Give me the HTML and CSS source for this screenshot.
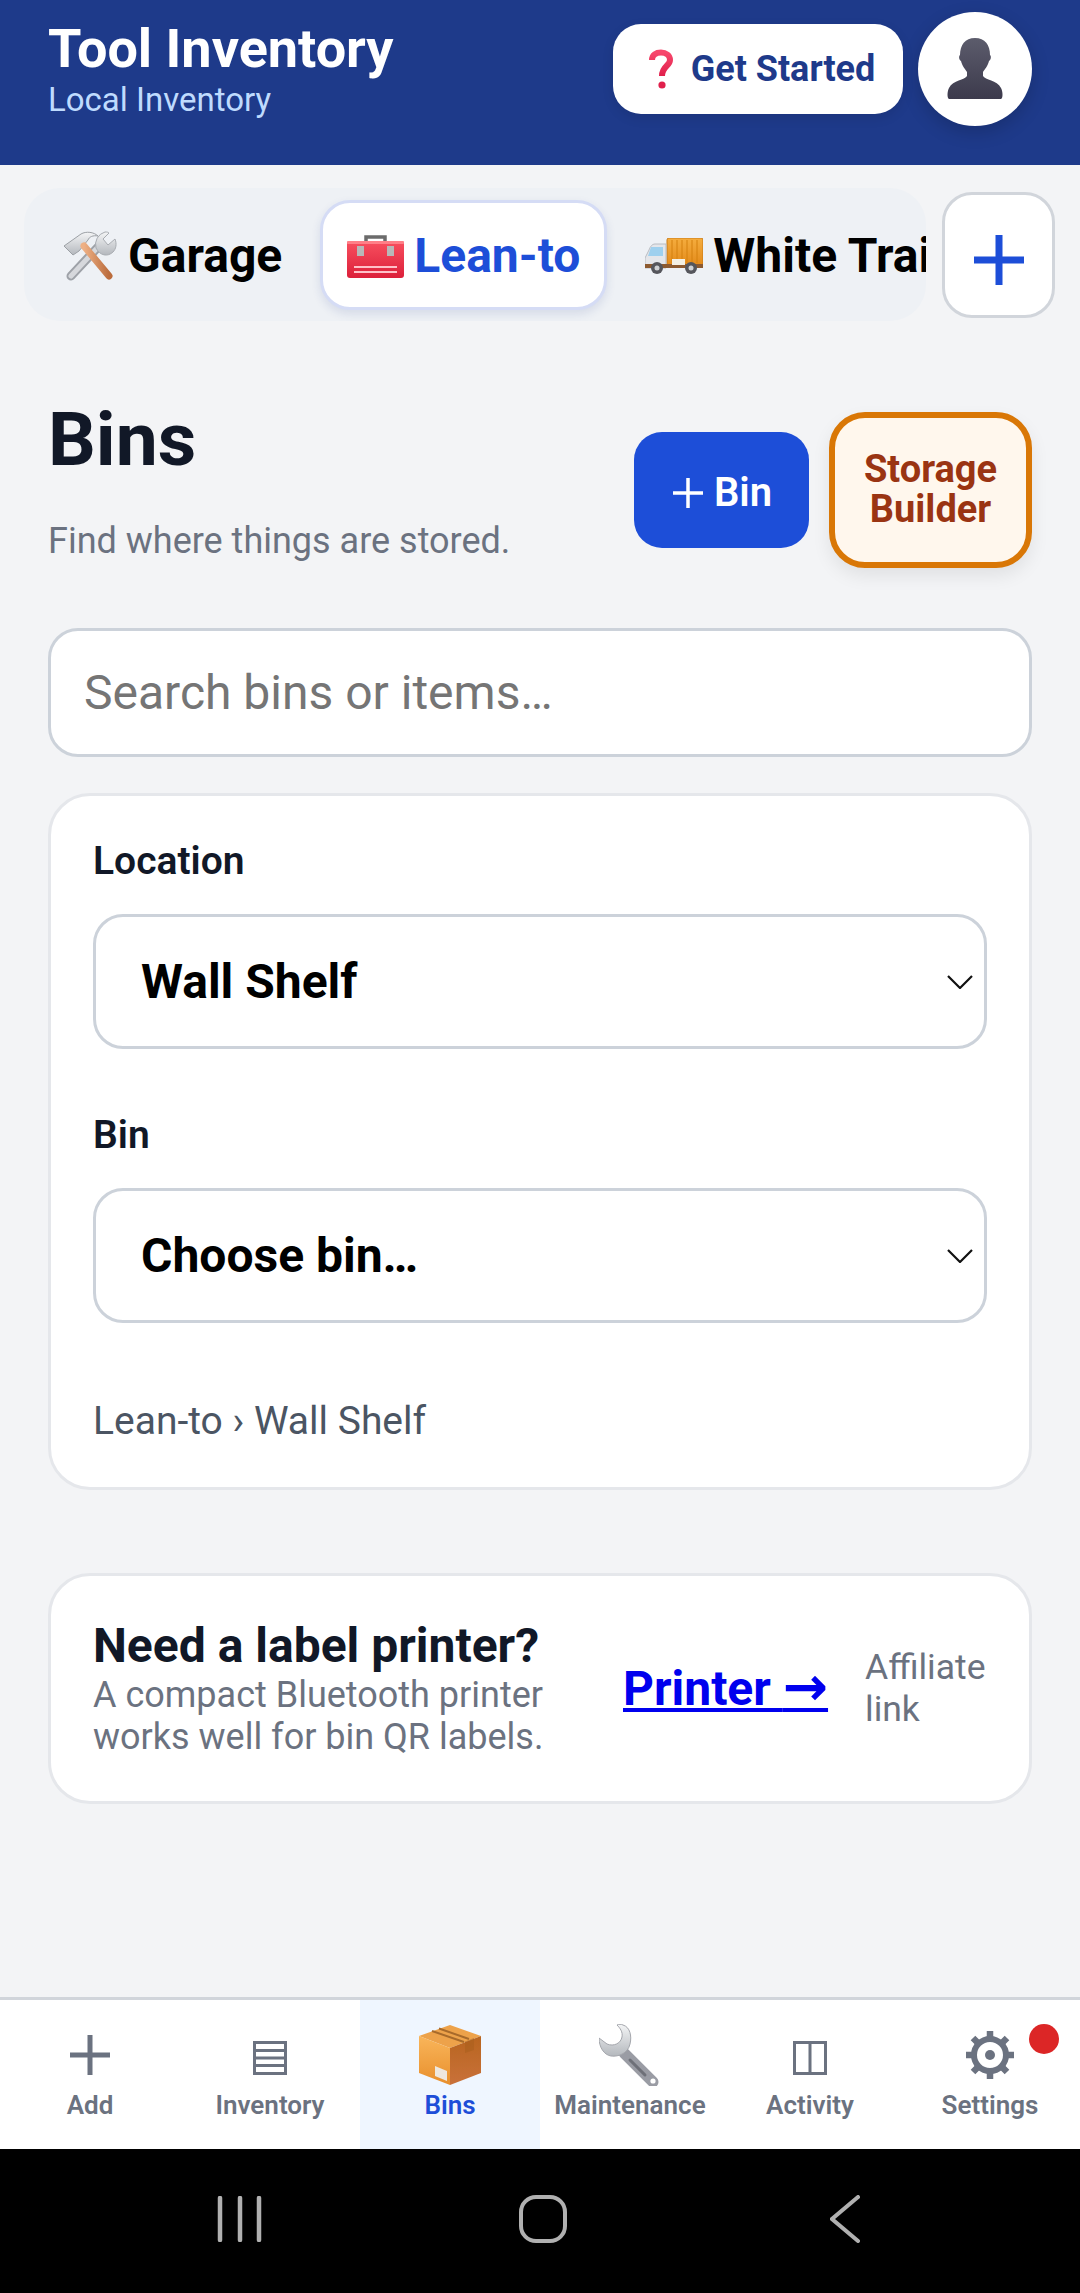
FILE: index.html
```html
<!DOCTYPE html>
<html lang="en">
<head>
    <meta charset="UTF-8">
    <meta name="viewport" content="width=device-width, initial-scale=1.0">
    <title>Tool Inventory</title>
    <link rel="stylesheet" href="styles.css">
</head>
<body>
    <svg class="defs" width="0" height="0" aria-hidden="true">
        <defs>
            <linearGradient id="steel" x1="0" y1="0" x2="0" y2="1"><stop offset="0" stop-color="#f4f5f6"/><stop offset="1" stop-color="#b4b8bd"/></linearGradient>
            <linearGradient id="handle" x1="0" y1="0" x2="1" y2="0"><stop offset="0" stop-color="#eeb084"/><stop offset="1" stop-color="#bb6c3c"/></linearGradient>
            <linearGradient id="redbox" x1="0" y1="0" x2="0" y2="1"><stop offset="0" stop-color="#f8505f"/><stop offset="1" stop-color="#dc1f3a"/></linearGradient>
            <linearGradient id="cargo" x1="0" y1="0" x2="0" y2="1"><stop offset="0" stop-color="#f5ad3e"/><stop offset="1" stop-color="#e38a1a"/></linearGradient>
            <linearGradient id="boxleft" x1="0" y1="0" x2="0" y2="1"><stop offset="0" stop-color="#f9b55a"/><stop offset="1" stop-color="#e88f2c"/></linearGradient>
            <linearGradient id="boxright" x1="0" y1="0" x2="0" y2="1"><stop offset="0" stop-color="#b8651f"/><stop offset="1" stop-color="#c9713a"/></linearGradient>
            <linearGradient id="person" x1="0" y1="0" x2="0" y2="1"><stop offset="0" stop-color="#5c5c6c"/><stop offset="1" stop-color="#3c3a4c"/></linearGradient>
            <linearGradient id="qmark" x1="0" y1="0" x2="0" y2="1"><stop offset="0" stop-color="#f7476c"/><stop offset="1" stop-color="#e0204c"/></linearGradient>
        </defs>
    </svg>

    <header class="topbar">
        <div class="brand">
            <h1>Tool Inventory</h1>
            <p>Local Inventory</p>
        </div>
        <div class="topbar-actions">
            <button class="get-started">
                <svg class="emoji-q" viewBox="0 0 26 40"><path d="M4 11C4 6 8 3.500 13 3.500S22 6.500 22 11C22 17 14 17 14 27" fill="none" stroke="url(#qmark)" stroke-width="6"/><circle cx="14" cy="36" r="3.600" fill="#e0204c"/></svg>
                Get Started
            </button>
            <div class="avatar">
                <svg viewBox="0 0 56 62" width="56" height="62"><path d="M28 0C38 0 43 7 43 17C44.500 18 44 22 42 23C41 28 37 32 36 34V38C38 42 50 42 54 50C56 54 56 60 54 61H2C0 60 0 54 2 50C6 42 18 42 20 38V34C19 32 15 28 14 23C12 22 11.500 18 13 17C13 7 18 0 28 0Z" fill="url(#person)"/></svg>
            </div>
        </div>
    </header>

    <div class="tabbar">
        <div class="tabs">
            <div class="tab">
                <svg class="emoji" viewBox="0 0 56 50" width="56" height="50">
                    <path d="M9 45L37 15" stroke="#9ea2a8" stroke-width="9" stroke-linecap="round"/>
                    <path d="M9 45L37 15" stroke="#d6d8dc" stroke-width="5" stroke-linecap="round"/>
                    <path d="M34 17A13 13 0 0 1 43 1C45 1 46 1 47 2L41 8L46 14L53 8C55 13 54 18 51 21C46 26 38 25 34 17Z" fill="url(#steel)" stroke="#a8acb1"/>
                    <path d="M2 15L19 3C24 0 32 1 36 5C31 4 27 6 26 9L17 20L11 24Z" fill="url(#steel)" stroke="#9ca0a5"/>
                    <path d="M22 15L47 45" stroke="url(#handle)" stroke-width="7" stroke-linecap="round"/>
                </svg>
                <span>Garage</span>
            </div>
            <div class="tab tab-active">
                <svg class="emoji" viewBox="0 0 57 44" width="57" height="44">
                    <path d="M19 9V3H38V9" fill="none" stroke="#6b6b6b" stroke-width="3.500"/>
                    <rect x="0" y="7" width="57" height="37" rx="3" fill="url(#redbox)"/>
                    <rect x="0" y="7" width="57" height="3" rx="1" fill="#ff7f87"/>
                    <rect x="10" y="12" width="7" height="10" fill="#b8b8b8"/>
                    <rect x="40" y="12" width="7" height="10" fill="#b8b8b8"/>
                    <rect x="7" y="32" width="43" height="2" fill="#ffc0c8"/>
                    <rect x="7" y="37" width="43" height="2" fill="#ffc0c8"/>
                </svg>
                <span>Lean-to</span>
            </div>
            <div class="tab">
                <svg class="emoji" viewBox="0 0 58 36" width="58" height="36">
                    <rect x="22" y="0" width="36" height="28" rx="2" fill="url(#cargo)" stroke="#c97a16"/>
                    <path d="M27 2V25M32 2V25M37 2V25M42 2V25M47 2V25M52 2V25" stroke="#d4800f" stroke-width="1"/>
                    <path d="M4 12C5 9 7 6 10 6H21V30H0V20Z" fill="#e4e6ea" stroke="#b8bcc2"/>
                    <path d="M6 9H18V18H3Z" fill="#9ed0ee"/>
                    <rect x="0" y="26" width="58" height="4" fill="#8c5a30"/>
                    <rect x="27" y="21" width="13" height="6" fill="#f4f0e4"/>
                    <circle cx="12" cy="30" r="6" fill="#55565c"/><circle cx="12" cy="30" r="2.500" fill="#cfd1d4"/>
                    <circle cx="46" cy="30" r="6" fill="#55565c"/><circle cx="46" cy="30" r="2.500" fill="#cfd1d4"/>
                </svg>
                <span>White Trailer</span>
            </div>
        </div>
        <button class="tab-add">
            <svg viewBox="0 0 50 50" width="50" height="50"><path d="M25 0V50M0 25H50" stroke="#1d4ed8" stroke-width="7"/></svg>
        </button>
    </div>

    <main class="content">
        <section class="page-head">
            <div class="page-title">
                <h2>Bins</h2>
                <p>Find where things are stored.</p>
            </div>
            <div class="page-actions">
                <button class="btn-bin">
                    <svg viewBox="0 0 30 30" width="30" height="30"><path d="M15 0V30M0 15H30" stroke="#fff" stroke-width="3.500"/></svg>
                    Bin
                </button>
                <button class="btn-storage">Storage Builder</button>
            </div>
        </section>

        <input class="search" type="text" placeholder="Search bins or items…">

        <section class="card picker">
            <label class="field-label">Location</label>
            <div class="select">
                <span>Wall Shelf</span>
                <svg viewBox="0 0 26 14" width="26" height="14"><path d="M1 1L13 13L25 1" fill="none" stroke="#111" stroke-width="2.200"/></svg>
            </div>
            <label class="field-label field-label-second">Bin</label>
            <div class="select">
                <span>Choose bin…</span>
                <svg viewBox="0 0 26 14" width="26" height="14"><path d="M1 1L13 13L25 1" fill="none" stroke="#111" stroke-width="2.200"/></svg>
            </div>
            <p class="crumb">Lean-to › Wall Shelf</p>
        </section>

        <section class="card promo">
            <div class="promo-text">
                <h3>Need a label printer?</h3>
                <p>A compact Bluetooth printer works well for bin QR labels.</p>
            </div>
            <a class="promo-link" href="#">Printer <span class="arrow">→</span></a>
            <span class="promo-note">Affiliate link</span>
        </section>
    </main>

    <nav class="bottom-nav">
        <div class="nav-item">
            <div class="nav-icon"><svg viewBox="0 0 40 40" width="40" height="40"><path d="M20 0V40M0 20H40" stroke="#6b7280" stroke-width="5"/></svg></div>
            <span>Add</span>
        </div>
        <div class="nav-item">
            <div class="nav-icon"><svg class="nav-square" viewBox="0 0 34 34" width="34" height="34"><path d="M1.500 1.500H32.500V32.500H1.500ZM1.500 9.500H32.500M1.500 17H32.500M1.500 24.500H32.500" fill="none" stroke="#6b7280" stroke-width="3"/></svg></div>
            <span>Inventory</span>
        </div>
        <div class="nav-item nav-active">
            <div class="nav-icon">
                <svg viewBox="0 0 62 60" width="62" height="60">
                    <path d="M31 0L62 11L31 23L0 11Z" fill="#eda24a"/>
                    <path d="M0 11L31 23V60L0 48Z" fill="url(#boxleft)"/>
                    <path d="M62 11L31 23V60L62 48Z" fill="url(#boxright)"/>
                    <path d="M13 6L45 17M20 3.500L50 14" stroke="#a86a2a" stroke-width="2"/>
                    <path d="M46 16.500L55 13V25L46 28Z" fill="#a85d1c" opacity=".5"/>
                    <path d="M16 41L28 46V56L16 51Z" fill="#eee8de"/>
                </svg>
            </div>
            <span>Bins</span>
        </div>
        <div class="nav-item">
            <div class="nav-icon">
                <svg viewBox="0 0 62 62" width="62" height="62">
                    <path d="M25 29L54 58" stroke="#9a9ca4" stroke-width="11" stroke-linecap="round"/>
                    <path d="M31 36L46 51" stroke="#6e7078" stroke-width="3" stroke-linecap="round"/>
                    <path d="M24 1C31 3 33 12 31 20C29 29 20 33 12 32C5 31 0 23 0 14L8 20C15 23 22 19 23 13C24 8 21 4 18 1C20 0 22 0 24 1Z" fill="url(#steel)" stroke="#a4a6ac"/>
                    <circle cx="54" cy="57" r="2.600" fill="#fff"/>
                </svg>
            </div>
            <span>Maintenance</span>
        </div>
        <div class="nav-item">
            <div class="nav-icon"><svg class="nav-square" viewBox="0 0 34 34" width="34" height="34"><path d="M1.500 1.500H32.500V32.500H1.500ZM17 1.500V32.500" fill="none" stroke="#6b7280" stroke-width="3"/></svg></div>
            <span>Activity</span>
        </div>
        <div class="nav-item">
            <div class="nav-icon">
                <svg viewBox="0 0 48 48" width="48" height="48">
                    <circle cx="24" cy="24" r="16" fill="none" stroke="#6b7280" stroke-width="6"/>
                    <path d="M24 0V8M24 40V48M0 24H8M40 24H48M7 7L13 13M35 35L41 41M41 7L35 13M13 35L7 41" stroke="#6b7280" stroke-width="6.500"/>
                    <circle cx="24" cy="24" r="5" fill="#6b7280"/>
                </svg>
            </div>
            <span>Settings</span>
            <i class="nav-dot"></i>
        </div>
    </nav>

    <div class="system-bar">
        <svg viewBox="0 0 46 46" width="46" height="46"><path d="M3 2V44M23 2V44M42 2V44" stroke="#b0b0b0" stroke-width="4.500" stroke-linecap="round"/></svg>
        <svg class="system-home" viewBox="0 0 48 48" width="48" height="48"><rect x="2" y="2" width="44" height="44" rx="15" fill="none" stroke="#b0b0b0" stroke-width="4"/></svg>
        <svg viewBox="0 0 30 48" width="30" height="48"><path d="M28 2L2 24L28 46" fill="none" stroke="#b0b0b0" stroke-width="4" stroke-linecap="round"/></svg>
    </div>
</body>
</html>
```

FILE: styles.css
```css
* {
    box-sizing: border-box;
}
html, body {
    margin: 0;
    padding: 0;
}
body {
    width: 1080px;
    height: 2293px;
    overflow: hidden;
    display: flex;
    flex-direction: column;
    font-family: Roboto, "Liberation Sans", sans-serif;
    background: #f3f4f6;
    color: #111827;
}
button {
    font-family: inherit;
    cursor: pointer;
}
h1, h2, h3, p {
    margin: 0;
}
.defs {
    position: absolute;
}

/* header */
.topbar {
    height: 165px;
    flex: none;
    display: flex;
    justify-content: space-between;
    padding: 12px 48px 0;
    background: #1e3a8a;
}
.brand {
    padding-top: 8px;
}
.brand h1 {
    font-size: 54px;
    line-height: 58px;
    font-weight: 700;
    color: #fff;
}
.brand p {
    font-size: 33px;
    line-height: 40px;
    margin-top: 2px;
    color: #bfdbfe;
}
.topbar-actions {
    display: flex;
    align-items: flex-start;
    gap: 15px;
}
.get-started {
    width: 290px;
    height: 90px;
    margin-top: 12px;
    display: flex;
    align-items: center;
    justify-content: center;
    gap: 17px;
    padding: 0 0 0 7px;
    border: none;
    border-radius: 28px;
    background: #fff;
    color: #1e3a8a;
    font-size: 36px;
    font-weight: 700;
    box-shadow: 0 4px 12px rgba(0, 0, 0, 0.1);
}
.emoji-q {
    width: 26px;
    height: 40px;
}
.avatar {
    width: 114px;
    height: 114px;
    border-radius: 50%;
    background: #fff;
    display: flex;
    align-items: center;
    justify-content: center;
    box-shadow: 0 6px 18px rgba(0, 0, 0, 0.18);
}

/* location tabs */
.tabbar {
    flex: none;
    display: flex;
    align-items: center;
    gap: 16px;
    padding: 23px 25px 0 24px;
}
.tabs {
    flex: 1;
    min-width: 0;
    height: 133px;
    display: flex;
    align-items: center;
    gap: 11px;
    padding-left: 11px;
    overflow: hidden;
    border-radius: 36px;
    background: #eef1f5;
}
.tab {
    flex: none;
    height: 110px;
    display: flex;
    align-items: center;
    gap: 10px;
    padding: 2px 24px 0;
    border: 3px solid transparent;
    border-radius: 30px;
    font-size: 48px;
    font-weight: 700;
    color: #000;
    white-space: nowrap;
}
.tab-active {
    background: #fff;
    border-color: #d5dcf5;
    color: #1d4ed8;
    box-shadow: 0 4px 10px rgba(30, 58, 138, 0.12);
}
.emoji {
    flex: none;
}
.tab-add {
    flex: none;
    width: 113px;
    height: 126px;
    display: flex;
    align-items: center;
    justify-content: center;
    border: 3px solid #d1d5db;
    border-radius: 30px;
    background: #fff;
    padding: 10px 0 0;
}

/* main column */
.content {
    flex: 1;
    min-height: 0;
    padding: 0 48px;
}
.page-head {
    display: flex;
    justify-content: space-between;
    padding-top: 76px;
}
.page-title h2 {
    font-size: 75px;
    line-height: 84px;
    font-weight: 700;
}
.page-title p {
    margin-top: 38px;
    font-size: 36px;
    line-height: 44px;
    color: #6b7280;
}
.page-actions {
    display: flex;
    align-items: center;
    gap: 20px;
    margin-top: 15px;
}
.btn-bin {
    width: 175px;
    height: 116px;
    display: flex;
    align-items: center;
    justify-content: center;
    gap: 11px;
    padding: 5px 0 0 2px;
    border: none;
    border-radius: 28px;
    background: #1d4ed8;
    color: #fff;
    font-size: 40px;
    font-weight: 600;
}
.btn-storage {
    width: 203px;
    height: 156px;
    border: 6px solid #d97706;
    border-radius: 36px;
    background: #fff7ed;
    color: #9a3412;
    font-size: 38px;
    line-height: 40px;
    font-weight: 700;
    padding: 0 20px 2px;
    box-shadow: 0 8px 18px rgba(0, 0, 0, 0.08);
}
.search {
    display: block;
    width: 100%;
    height: 129px;
    margin-top: 60px;
    padding: 0 33px;
    border: 3px solid #ccd2da;
    border-radius: 30px;
    background: #fff;
    font-family: inherit;
    font-size: 48px;
}
.search::placeholder {
    color: #757575;
    opacity: 1;
}
.card {
    background: #fff;
    border: 3px solid #e5e7eb;
    border-radius: 42px;
}
.picker {
    margin-top: 36px;
    height: 697px;
    padding: 43px 42px 0;
}
.field-label {
    display: block;
    font-size: 39px;
    line-height: 44px;
    font-weight: 600;
}
.field-label-second {
    margin-top: 64px;
}
.select {
    height: 135px;
    margin-top: 31px;
    display: flex;
    align-items: center;
    justify-content: space-between;
    padding: 0 11px 0 45px;
    border: 3px solid #ccd2da;
    border-radius: 30px;
    font-size: 48px;
    font-weight: 700;
    color: #000;
}
.crumb {
    margin-top: 75px;
    font-size: 39px;
    line-height: 46px;
    color: #4b5563;
}
.promo {
    margin-top: 83px;
    height: 231px;
    display: flex;
    align-items: center;
    padding: 0 42px;
}
.promo-text {
    width: 530px;
    flex: none;
}
.promo-text h3 {
    font-size: 48px;
    line-height: 54px;
    font-weight: 700;
}
.promo-text p {
    width: 490px;
    margin-top: 1px;
    font-size: 36px;
    line-height: 42px;
    color: #6b7280;
}
.promo-link {
    flex: none;
    width: 206px;
    font-size: 48px;
    line-height: 56px;
    font-weight: 700;
    color: #0000ee;
    white-space: nowrap;
}
.arrow {
    font-family: "DejaVu Sans", sans-serif;
    font-size: 54px;
    line-height: 1;
}
.promo-note {
    margin-left: 36px;
    margin-top: -2px;
    font-size: 35.500px;
    line-height: 42px;
    color: #6b7280;
}

/* bottom navigation */
.bottom-nav {
    flex: none;
    height: 152px;
    display: grid;
    grid-template-columns: repeat(6, 180px);
    border-top: 3px solid #d1d5db;
    background: #fff;
}
.nav-item {
    position: relative;
    display: flex;
    flex-direction: column;
    align-items: center;
    font-size: 26px;
    font-weight: 600;
    color: #6b7280;
    padding-top: 23px;
}
.nav-icon {
    height: 64px;
    display: flex;
    align-items: center;
    justify-content: center;
}
.nav-item span {
    line-height: 36px;
}
.nav-square {
    margin-top: 6px;
}
.nav-active {
    background: #eff6ff;
    color: #1d4ed8;
}
.nav-dot {
    position: absolute;
    top: 24px;
    right: 21px;
    width: 30px;
    height: 30px;
    border-radius: 50%;
    background: #dc2626;
}

/* android buttons */
.system-bar {
    flex: none;
    height: 144px;
    display: flex;
    align-items: center;
    justify-content: space-between;
    padding: 0 220px 4px 217px;
    background: #000;
}
.system-home {
    margin-right: 8px;
}
```
